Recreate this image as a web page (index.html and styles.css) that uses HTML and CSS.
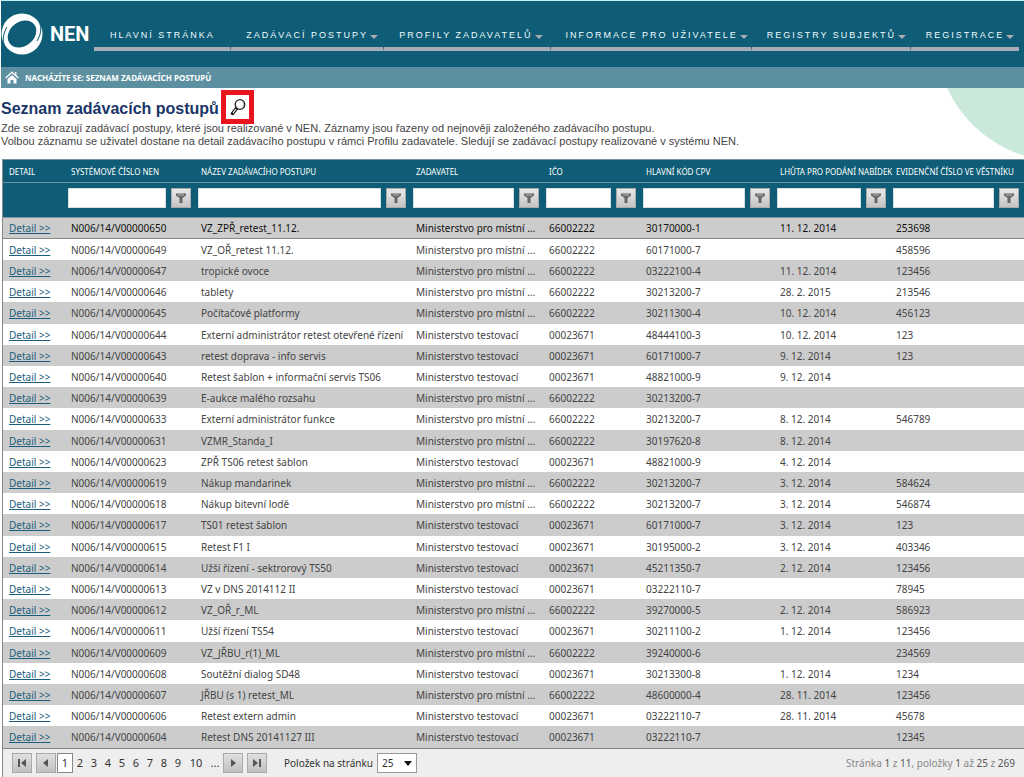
FILE: index.html
```html
<!DOCTYPE html>
<html lang="cs">
<head>
<meta charset="utf-8">
<title>NEN – Seznam zadávacích postupů</title>
<link rel="stylesheet" href="styles.css">
</head>
<body>
<svg class="defs" aria-hidden="true">
<symbol id="funnel" viewBox="0 0 10 10"><path d="M0 0.500h10v2L6.500 5V10h-3V5L0 2.500z" fill="#666"/><path d="M2 2h6" stroke="#bbb" stroke-width="1"/></symbol>
</svg>
<header class="top">
<a class="logo" href="#">
<svg class="logo-mark" viewBox="0 0 42 42" aria-hidden="true"><circle cx="21" cy="21" r="20.500" fill="#fff"/><ellipse cx="21" cy="21" rx="15.500" ry="12" transform="rotate(-38 21 21)" fill="#0e5c75"/><path d="M33 9c5 4 6 12 2 18M9 33C4 29 3 21 7 15" fill="none" stroke="#fff" stroke-width="2"/><path d="M36 5c5 7 5 15 0 23M6 37C1 30 1 22 6 14" fill="none" stroke="#0e5c75" stroke-width="1"/></svg>
<span>NEN</span></a>
<nav class="menu">
<a href="#" class="m1">HLAVNÍ STRÁNKA</a>
<a href="#" class="m2">ZADÁVACÍ POSTUPY<i></i></a>
<a href="#" class="m3">PROFILY ZADAVATELŮ<i></i></a>
<a href="#" class="m4">INFORMACE PRO UŽIVATELE<i></i></a>
<a href="#" class="m5">REGISTRY SUBJEKTŮ<i></i></a>
<a href="#" class="m6">REGISTRACE<i></i></a>
</nav>
</header>
<div class="crumbs">
<svg class="home" viewBox="0 0 14 13" aria-hidden="true"><path d="M.7 7 7 1.200 13.300 7M10.800 1v3" fill="none" stroke="#fff" stroke-width="1.300"/><path d="M2.500 8 7 4l4.500 4V12.500H8.500V9h-3v3.500h-3z" fill="#fff"/></svg>
<span>NACHÁZÍTE SE: SEZNAM ZADÁVACÍCH POSTUPŮ</span>
</div>
<main>
<section class="intro">
<h1>Seznam zadávacích postupů
<button class="search" aria-label="Hledat"><svg viewBox="0 0 18 18" aria-hidden="true"><path d="M3.500 15.500 7.500 10.500" stroke="#111" stroke-width="3.500" stroke-linecap="round"/><path d="M4 14.800 7 11" stroke="#fff" stroke-width="1.200"/><circle cx="11" cy="6.500" r="4.800" fill="#fff" stroke="#222" stroke-width="1.300"/><path d="M13 3.500a3.500 3.500 0 0 1 0 6" fill="none" stroke="#aaa"/></svg></button></h1>
<p>Zde se zobrazují zadávací postupy, které jsou realizované v NEN. Záznamy jsou řazeny od nejnověji založeného zadávacího postupu.<br>Volbou záznamu se uživatel dostane na detail zadávacího postupu v rámci Profilu zadavatele. Sledují se zadávací postupy realizované v systému NEN.</p>
</section>
<table class="grid">
<colgroup><col class="c1"><col class="c2"><col class="c3"><col class="c4"><col class="c5"><col class="c6"><col class="c7"><col class="c8"></colgroup>
<thead>
<tr class="heads"><th>DETAIL</th><th>SYSTÉMOVÉ ČÍSLO NEN</th><th>NÁZEV ZADÁVACÍHO POSTUPU</th><th>ZADAVATEL</th><th>IČO</th><th>HLAVNÍ KÓD CPV</th><th>LHŮTA PRO PODÁNÍ NABÍDEK</th><th>EVIDENČNÍ ČÍSLO VE VĚSTNÍKU</th></tr>
<tr class="filters"><td></td>
<td><div><input type="text" aria-label="Systémové číslo NEN"><button aria-label="Filtr"><svg><use href="#funnel"/></svg></button></div></td>
<td><div><input type="text" aria-label="Název zadávacího postupu"><button aria-label="Filtr"><svg><use href="#funnel"/></svg></button></div></td>
<td><div><input type="text" aria-label="Zadavatel"><button aria-label="Filtr"><svg><use href="#funnel"/></svg></button></div></td>
<td><div><input type="text" aria-label="IČO"><button aria-label="Filtr"><svg><use href="#funnel"/></svg></button></div></td>
<td><div><input type="text" aria-label="Hlavní kód CPV"><button aria-label="Filtr"><svg><use href="#funnel"/></svg></button></div></td>
<td><div><input type="text" aria-label="Lhůta pro podání nabídek"><button aria-label="Filtr"><svg><use href="#funnel"/></svg></button></div></td>
<td><div><input type="text" aria-label="Evidenční číslo ve věstníku"><button aria-label="Filtr"><svg><use href="#funnel"/></svg></button></div></td></tr>
</thead>
<tbody>
<tr class="active"><td><a href="#">Detail &gt;&gt;</a></td><td>N006/14/V00000650</td><td>VZ_ZPŘ_retest_11.12.</td><td>Ministerstvo pro místní ...</td><td>66002222</td><td>30170000-1</td><td>11. 12. 2014</td><td>253698</td></tr>
<tr><td><a href="#">Detail &gt;&gt;</a></td><td>N006/14/V00000649</td><td>VZ_OŘ_retest 11.12.</td><td>Ministerstvo pro místní ...</td><td>66002222</td><td>60171000-7</td><td></td><td>458596</td></tr>
<tr><td><a href="#">Detail &gt;&gt;</a></td><td>N006/14/V00000647</td><td>tropické ovoce</td><td>Ministerstvo pro místní ...</td><td>66002222</td><td>03222100-4</td><td>11. 12. 2014</td><td>123456</td></tr>
<tr><td><a href="#">Detail &gt;&gt;</a></td><td>N006/14/V00000646</td><td>tablety</td><td>Ministerstvo pro místní ...</td><td>66002222</td><td>30213200-7</td><td>28. 2. 2015</td><td>213546</td></tr>
<tr><td><a href="#">Detail &gt;&gt;</a></td><td>N006/14/V00000645</td><td>Počítačové platformy</td><td>Ministerstvo pro místní ...</td><td>66002222</td><td>30211300-4</td><td>10. 12. 2014</td><td>456123</td></tr>
<tr><td><a href="#">Detail &gt;&gt;</a></td><td>N006/14/V00000644</td><td>Externí administrátor retest otevřené řízení</td><td>Ministerstvo testovací</td><td>00023671</td><td>48444100-3</td><td>10. 12. 2014</td><td>123</td></tr>
<tr><td><a href="#">Detail &gt;&gt;</a></td><td>N006/14/V00000643</td><td>retest doprava - info servis</td><td>Ministerstvo testovací</td><td>00023671</td><td>60171000-7</td><td>9. 12. 2014</td><td>123</td></tr>
<tr><td><a href="#">Detail &gt;&gt;</a></td><td>N006/14/V00000640</td><td>Retest šablon + informační servis TS06</td><td>Ministerstvo testovací</td><td>00023671</td><td>48821000-9</td><td>9. 12. 2014</td><td></td></tr>
<tr><td><a href="#">Detail &gt;&gt;</a></td><td>N006/14/V00000639</td><td>E-aukce malého rozsahu</td><td>Ministerstvo pro místní ...</td><td>66002222</td><td>30213200-7</td><td></td><td></td></tr>
<tr><td><a href="#">Detail &gt;&gt;</a></td><td>N006/14/V00000633</td><td>Externí administrátor funkce</td><td>Ministerstvo pro místní ...</td><td>66002222</td><td>30213200-7</td><td>8. 12. 2014</td><td>546789</td></tr>
<tr><td><a href="#">Detail &gt;&gt;</a></td><td>N006/14/V00000631</td><td>VZMR_Standa_I</td><td>Ministerstvo pro místní ...</td><td>66002222</td><td>30197620-8</td><td>8. 12. 2014</td><td></td></tr>
<tr><td><a href="#">Detail &gt;&gt;</a></td><td>N006/14/V00000623</td><td>ZPŘ TS06 retest šablon</td><td>Ministerstvo testovací</td><td>00023671</td><td>48821000-9</td><td>4. 12. 2014</td><td></td></tr>
<tr><td><a href="#">Detail &gt;&gt;</a></td><td>N006/14/V00000619</td><td>Nákup mandarinek</td><td>Ministerstvo pro místní ...</td><td>66002222</td><td>30213200-7</td><td>3. 12. 2014</td><td>584624</td></tr>
<tr><td><a href="#">Detail &gt;&gt;</a></td><td>N006/14/V00000618</td><td>Nákup bitevní lodě</td><td>Ministerstvo pro místní ...</td><td>66002222</td><td>30213200-7</td><td>3. 12. 2014</td><td>546874</td></tr>
<tr><td><a href="#">Detail &gt;&gt;</a></td><td>N006/14/V00000617</td><td>TS01 retest šablon</td><td>Ministerstvo testovací</td><td>00023671</td><td>60171000-7</td><td>3. 12. 2014</td><td>123</td></tr>
<tr><td><a href="#">Detail &gt;&gt;</a></td><td>N006/14/V00000615</td><td>Retest F1 I</td><td>Ministerstvo testovací</td><td>00023671</td><td>30195000-2</td><td>3. 12. 2014</td><td>403346</td></tr>
<tr><td><a href="#">Detail &gt;&gt;</a></td><td>N006/14/V00000614</td><td>Užší řízení - sektrorový TS50</td><td>Ministerstvo testovací</td><td>00023671</td><td>45211350-7</td><td>2. 12. 2014</td><td>123456</td></tr>
<tr><td><a href="#">Detail &gt;&gt;</a></td><td>N006/14/V00000613</td><td>VZ v DNS 2014112 II</td><td>Ministerstvo testovací</td><td>00023671</td><td>03222110-7</td><td></td><td>78945</td></tr>
<tr><td><a href="#">Detail &gt;&gt;</a></td><td>N006/14/V00000612</td><td>VZ_OŘ_r_ML</td><td>Ministerstvo pro místní ...</td><td>66002222</td><td>39270000-5</td><td>2. 12. 2014</td><td>586923</td></tr>
<tr><td><a href="#">Detail &gt;&gt;</a></td><td>N006/14/V00000611</td><td>Užší řízení TS54</td><td>Ministerstvo testovací</td><td>00023671</td><td>30211100-2</td><td>1. 12. 2014</td><td>123456</td></tr>
<tr><td><a href="#">Detail &gt;&gt;</a></td><td>N006/14/V00000609</td><td>VZ_JŘBU_r(1)_ML</td><td>Ministerstvo pro místní ...</td><td>66002222</td><td>39240000-6</td><td></td><td>234569</td></tr>
<tr><td><a href="#">Detail &gt;&gt;</a></td><td>N006/14/V00000608</td><td>Soutěžní dialog SD48</td><td>Ministerstvo testovací</td><td>00023671</td><td>30213300-8</td><td>1. 12. 2014</td><td>1234</td></tr>
<tr><td><a href="#">Detail &gt;&gt;</a></td><td>N006/14/V00000607</td><td>JŘBU (s 1) retest_ML</td><td>Ministerstvo pro místní ...</td><td>66002222</td><td>48600000-4</td><td>28. 11. 2014</td><td>123456</td></tr>
<tr><td><a href="#">Detail &gt;&gt;</a></td><td>N006/14/V00000606</td><td>Retest extern admin</td><td>Ministerstvo testovací</td><td>00023671</td><td>03222110-7</td><td>28. 11. 2014</td><td>45678</td></tr>
<tr><td><a href="#">Detail &gt;&gt;</a></td><td>N006/14/V00000604</td><td>Retest DNS 20141127 III</td><td>Ministerstvo testovací</td><td>00023671</td><td>03222110-7</td><td></td><td>12345</td></tr>
</tbody>
</table>
<footer class="pager">
<button class="step" aria-label="První"><svg viewBox="0 0 10 8"><path d="M1 0h2v8H1zM9 0v8L4 4z"/></svg></button>
<button class="step" aria-label="Předchozí"><svg viewBox="0 0 10 8"><path d="M7 0v8L2 4z"/></svg></button>
<div class="pages"><a href="#" class="on">1</a><a href="#">2</a><a href="#">3</a><a href="#">4</a><a href="#">5</a><a href="#">6</a><a href="#">7</a><a href="#">8</a><a href="#">9</a><a href="#" class="wide">10</a><a href="#">...</a></div>
<button class="step" aria-label="Další"><svg viewBox="0 0 10 8"><path d="M3 0v8l5-4z"/></svg></button>
<button class="step" aria-label="Poslední"><svg viewBox="0 0 10 8"><path d="M7 0h2v8H7zM1 0v8l5-4z"/></svg></button>
<label for="size">Položek na stránku</label>
<span class="pick"><select id="size"><option>25</option><option>50</option></select></span>
<p>Stránka <b>1</b> z <b>11</b>, položky <b>1</b> až <b>25</b> z <b>269</b></p>
</footer>
</main>
</body>
</html>
```

FILE: styles.css
```css
* { box-sizing: border-box; }
body {
  margin: 0;
  padding-left: 1px;
  border-top: 1px solid #c4f0f4;
  background: #fff;
  font-family: "Noto Sans", "Open Sans", sans-serif;
  font-size: 10px;
  color: #444;
}
.defs { position: absolute; width: 0; height: 0; }
a { color: inherit; text-decoration: none; }

.top {
  display: flex;
  height: 66px;
  padding-right: 5px;
  background: #0e5c75;
}
.logo {
  display: flex;
  flex: 0 0 93px;
  align-items: center;
  gap: 7px;
  color: #fff;
  font-family: Roboto, sans-serif;
  font-size: 20px;
  font-weight: 700;
}
.logo-mark { width: 42px; height: 42px; }
.menu { display: flex; flex: 1; min-width: 0; padding: 24px 0 16px; }
.menu a {
  display: flex;
  align-items: center;
  gap: 2px;
  min-width: 0;
  padding: 0 0 2px 16px;
  border-bottom: 4px solid #a9abb5;
  color: #eefbff;
  font-family: "Liberation Sans", Arial, sans-serif;
  font-size: 9px;
  letter-spacing: 2px;
  white-space: nowrap;
}
.menu a + a { border-left: 1px solid #0e5c75; padding-left: 15px; }
.menu i {
  margin-top: 3px;
  border: 4px solid transparent;
  border-top: 4px solid #a9abb5;
  border-bottom: 0;
}
.m1 { flex: 1 1 136px; }
.m2 { flex: 1 1 153px; }
.m3 { flex: 1 1 166px; }
.m4 { flex: 1 1 201px; }
.m5 { flex: 1 1 159px; }
.m6 { flex: 1 1 109px; }

.crumbs {
  display: flex;
  align-items: center;
  gap: 6px;
  height: 21px;
  padding-left: 4px;
  background: #5c8fa0;
  color: #fff;
  font-size: 8px;
  font-weight: 700;
}
.home { width: 14px; height: 13px; }

.intro {
  padding-top: 10px;
  height: 71px;
  background: radial-gradient(circle at 1061px -53px, #cae9da 126px, transparent 127px);
  font-family: "Liberation Sans", Arial, sans-serif;
}
h1 {
  position: relative;
  width: max-content;
  margin: 0;
  color: #1a3668;
  font-size: 16px;
  line-height: 22px;
}
.search {
  position: absolute;
  left: 220px;
  top: -8px;
  width: 33px;
  height: 34px;
  padding: 3px;
  border: 5px solid #e8141e;
  background: #fff;
}
.search svg { display: block; width: 18px; height: 18px; }
.intro p { margin: 2px 0 0; font-size: 11px; line-height: 13px; }

.grid {
  width: calc(100% - 1px);
  margin-left: 1px;
  border-collapse: separate;
  border-spacing: 0;
  table-layout: fixed;
  border-left: 1px solid #888;
  border-top: 1px solid #7891a0;
}
.c1 { width: 61px; }
.c2 { width: 130px; }
.c3 { width: 215px; }
.c4 { width: 133px; }
.c5 { width: 97px; }
.c6 { width: 134px; }
.c7 { width: 116px; }
.c8 { width: 135px; }
.heads th {
  height: 23px;
  padding: 0 0 0 7px;
  border-bottom: 1px solid #6b93a3;
  background: #0e5c75;
  color: #fff;
  font-size: 8px;
  font-weight: 400;
  text-align: left;
  white-space: nowrap;
}
.filters td { height: 35px; padding: 0 3px; background: #0e5c75; border-bottom: 1px solid #8298a2; }
.filters td:last-child { padding-right: 5px; }
.filters div { display: flex; gap: 5px; padding: 0 0 4px 1px; }
.filters input { flex: 1; min-width: 0; height: 20px; padding: 0 4px; border: 1px solid #d5e0e4; background: #fff; }
.filters button {
  display: grid;
  place-items: center;
  width: 20px;
  height: 20px;
  padding: 0;
  border: 1px solid #aaa;
  background: linear-gradient(#e8e8e8, #c4c4c4);
}
.filters svg { width: 10px; height: 10px; }
tbody td { height: 21px; padding: 0 0 0 7px; line-height: 14px; white-space: nowrap; }
.heads th:first-child, tbody td:first-child { padding-left: 6px; }
tbody tr:nth-child(5n) td { height: 22px; }
tbody tr:nth-child(odd) { background: #ccc; }
tbody a { color: #1b5d7c; text-decoration: underline; }
.active { color: #111; }
.active td { border-bottom: 1px solid #888; }

.pager {
  display: flex;
  align-items: center;
  height: 29px;
  margin-left: 1px;
  padding: 0 9px;
  border-top: 1px solid #888;
  border-left: 1px solid #888;
  background: #eee;
}
.step {
  display: grid;
  place-items: center;
  width: 20px;
  height: 20px;
  padding: 0;
  margin-right: 4px;
  border: 1px solid #aaa;
  background: linear-gradient(#e0e0e0, #c0c0c0);
}
.step svg { width: 10px; height: 8px; fill: #555; }
.pages { display: flex; margin-left: -3px; font-size: 11px; }
.pages a { flex: 0 0 14px; line-height: 20px; text-align: center; color: #333; }
.pages .on { flex-basis: 16px; border: 1px solid #888; background: #fff; line-height: 18px; }
.pages .wide { flex-basis: 22px; }
.pages a:last-child { flex-basis: 16px; }
.pager label { margin: 0 4px 0 13px; color: #333; }
.pick { position: relative; }
.pick::after {
  content: "";
  position: absolute;
  right: 5px;
  top: 8px;
  border: 4px solid transparent;
  border-top: 5px solid #111;
  border-bottom: 0;
  pointer-events: none;
}
.pick select {
  appearance: none;
  display: block;
  width: 40px;
  height: 20px;
  padding: 0 4px;
  border: 1px solid #999;
  border-radius: 0;
  background: #fff;
  color: #333;
  font: inherit;
  line-height: 18px;
}
.pager p { margin: 0 0 0 auto; color: #888; }
.pager b { color: #555; font-weight: 400; }
```
